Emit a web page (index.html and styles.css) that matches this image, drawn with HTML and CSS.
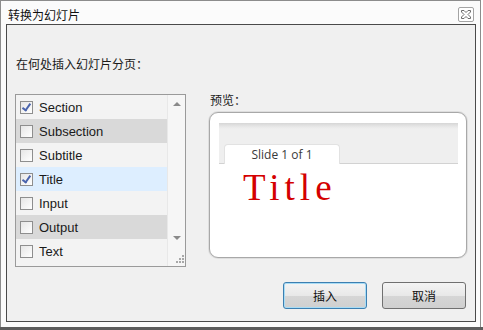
FILE: index.html
```html
<!DOCTYPE html>
<html>
<head>
<meta charset="utf-8">
<link rel="stylesheet" href="styles.css">
</head>
<body>
<div class="window">
  <div class="titlebar">
    <span class="title">转换为幻灯片</span>
    <span class="close">
      <svg width="12" height="11" viewBox="0 0 12 11"><path d="M1.5 1.5 L4 1.5 L6 3.5 L8 1.5 L10.5 1.5 L10.5 3 L8 5.5 L10.5 8 L10.5 9.5 L8 9.5 L6 7.5 L4 9.5 L1.5 9.5 L1.5 8 L4 5.5 L1.5 3 Z" fill="#fff" stroke="#6d6d6d" stroke-width="1"/></svg>
    </span>
  </div>
  <div class="panel">
    <div class="prompt">在何处插入幻灯片分页：</div>
    <div class="main">
      <div class="listbox">
        <div class="rows">
          <div class="row"><span class="cb checked"></span>Section</div>
          <div class="row gray"><span class="cb"></span>Subsection</div>
          <div class="row"><span class="cb"></span>Subtitle</div>
          <div class="row blue"><span class="cb checked"></span>Title</div>
          <div class="row"><span class="cb"></span>Input</div>
          <div class="row gray"><span class="cb"></span>Output</div>
          <div class="row"><span class="cb"></span>Text</div>
        </div>
        <div class="scroll">
          <span class="arrow up"></span>
          <span class="track"></span>
          <span class="arrow down"></span>
          <span class="grip">
            <svg width="9" height="9" viewBox="0 0 9 9"><g fill="#a8a8a8"><rect x="7" y="1" width="2" height="2"/><rect x="4" y="4" width="2" height="2"/><rect x="7" y="4" width="2" height="2"/><rect x="1" y="7" width="2" height="2"/><rect x="4" y="7" width="2" height="2"/><rect x="7" y="7" width="2" height="2"/></g></svg>
          </span>
        </div>
      </div>
      <div class="previewcol">
        <div class="plabel">预览：</div>
        <div class="preview">
          <div class="strip">
            <div class="tab">Slide 1 of 1</div>
          </div>
          <div class="slidetitle">Title</div>
        </div>
      </div>
    </div>
    <div class="buttons">
      <button class="btn default">插入</button>
      <button class="btn">取消</button>
    </div>
  </div>
</div>
<div class="taskbar"></div>
</body>
</html>
```
FILE: styles.css
```css
html, body {
  margin: 0;
  padding: 0;
  background: #ffffff;
  font-family: "Liberation Sans", "Noto Sans CJK SC", sans-serif;
  font-size: 12px;
  color: #1a1a1a;
  overflow: hidden;
}
.window {
  width: 479px;
  height: 326px;
  border: 1px solid #8c8c8c;
  border-bottom: none;
  background: #fbfbfb;
}
.titlebar {
  height: 23px;
  display: flex;
  align-items: center;
  justify-content: space-between;
  padding: 0 6px 0 7px;
}
.title {
  font-family: "Noto Sans CJK SC", sans-serif;
  font-size: 12px;
  color: #111;
  margin-top: 3px;
}
.close {
  width: 14px;
  height: 13px;
  border: 1px solid #a4a4a4;
  border-radius: 2px;
  display: flex;
  align-items: center;
  justify-content: center;
  margin-top: 3px;
  background: #fff;
}
.panel {
  box-sizing: border-box;
  margin-left: 5px;
  width: 470px;
  height: 298px;
  border: 1px solid #4a4a4a;
  background: #f0f0f0;
  padding: 30px 0 0 8px;
}
.prompt {
  font-family: "Noto Sans CJK SC", sans-serif;
  font-size: 12px;
  line-height: 18px;
  margin-left: 1px;
}
.main {
  display: flex;
  margin-top: 21px;
  gap: 23px;
}
.listbox {
  width: 169px;
  height: 171px;
  border: 1px solid #9a9a9a;
  background: #f3f3f3;
  display: flex;
}
.rows {
  width: 152px;
}
.row {
  height: 24px;
  display: flex;
  align-items: center;
  font-size: 13px;
  color: #1a1a1a;
}
.row.gray { background: #d9d9d9; }
.row.blue { background: #ddeeff; }
.cb {
  width: 11px;
  height: 11px;
  border: 1px solid #8e8e8e;
  background: linear-gradient(135deg, #e6e6e6, #ffffff);
  margin: 0 6px 0 4px;
  position: relative;
  box-sizing: content-box;
}
.cb.checked::after {
  content: "";
  position: absolute;
  left: 3px;
  top: 0px;
  width: 3px;
  height: 7px;
  border-right: 2px solid #4a64ad;
  border-bottom: 2px solid #4a64ad;
  transform: rotate(35deg);
}
.scroll {
  width: 17px;
  display: flex;
  flex-direction: column;
  align-items: center;
  background: #f6f6f6;
  border-left: 1px solid #e8e8e8;
}
.arrow {
  width: 0;
  height: 0;
  border-left: 4px solid transparent;
  border-right: 4px solid transparent;
}
.arrow.up {
  border-bottom: 4px solid #8a8a8a;
  margin-top: 7px;
}
.arrow.down {
  border-top: 4px solid #8a8a8a;
}
.track { flex: 1; }
.grip {
  align-self: flex-end;
  height: 9px;
  margin: 14px 1px 3px 0;
  display: flex;
}
.previewcol {
  display: flex;
  flex-direction: column;
}
.plabel {
  font-family: "Noto Sans CJK SC", sans-serif;
  font-size: 12px;
  line-height: 16px;
  margin: -2px 0 4px 1px;
}
.preview {
  width: 256px;
  height: 144px;
  border: 1px solid #a8a8a8;
  border-radius: 9px;
  background: #ffffff;
  box-shadow: 0 0 0 1px #dedede;
}
.strip {
  margin: 10px 8px 0 9px;
  height: 40px;
  background: linear-gradient(#d6d6d6 0, #e9e9e9 4px, #efefef 6px, #efefef 100%);
  border-bottom: 1px solid #d2d2d2;
  display: flex;
  align-items: flex-end;
}
.tab {
  width: 114px;
  height: 19px;
  margin: 0 0 -1px 5px;
  background: #fff;
  border: 1px solid #e2e2e2;
  border-bottom: none;
  border-radius: 4px 4px 0 0;
  font-family: "Open Sans", "Liberation Sans", sans-serif;
  font-size: 12px;
  line-height: 19px;
  text-align: center;
  color: #3a3a3a;
}
.slidetitle {
  margin: 4px 0 0 33px;
  font-family: "Liberation Serif", serif;
  font-size: 37px;
  line-height: 40px;
  letter-spacing: 5px;
  color: #d40000;
}
.buttons {
  display: flex;
  justify-content: flex-end;
  gap: 15px;
  margin-top: 15px;
  padding-right: 9px;
}
.btn {
  width: 84px;
  height: 27px;
  border: 1px solid #707070;
  border-radius: 3px;
  background: linear-gradient(#f4f4f4, #e8e8e8 50%, #d6d6d6 51%, #d0d0d0);
  font-family: "Noto Sans CJK SC", sans-serif;
  font-size: 12px;
  color: #111;
  padding: 0;
}
.btn.default {
  border-color: #3c7fb1;
  box-shadow: inset 0 0 0 1px #a8dcf5;
}
.taskbar {
  height: 3px;
  background: #5c5c5c;
}
```
